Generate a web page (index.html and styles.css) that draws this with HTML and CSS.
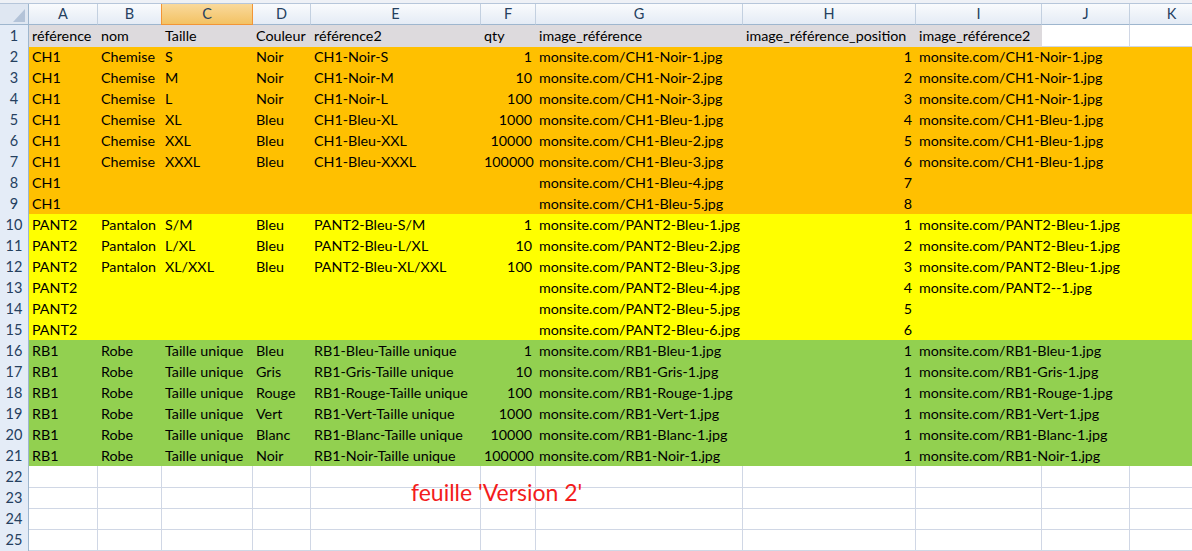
FILE: index.html
```html
<!DOCTYPE html>
<html lang="fr">
<head>
<meta charset="utf-8">
<title>Feuille Version 2</title>
<link rel="stylesheet" href="styles.css">
</head>
<body>
<div class="sheet">
  <div class="topstrip"></div>
  <div class="row colhead">
    <div class="corner"><svg width="12" height="13" viewBox="0 0 12 13"><polygon points="12,0 12,13 0,13" fill="#b3c3d8"/></svg></div>
    <div class="ch">A</div><div class="ch">B</div><div class="ch sel">C</div><div class="ch">D</div><div class="ch">E</div><div class="ch">F</div><div class="ch">G</div><div class="ch">H</div><div class="ch">I</div><div class="ch">J</div><div class="ch">K</div>
  </div>

  <div class="row">
    <div class="rh">1</div>
    <div class="c gray">référence</div><div class="c gray">nom</div><div class="c gray">Taille</div><div class="c gray">Couleur</div><div class="c gray">référence2</div><div class="c gray">qty</div><div class="c gray">image_référence</div><div class="c gray">image_référence_position</div><div class="c gray">image_référence2</div><div class="c"></div><div class="c"></div>
  </div>

  <div class="row fill orange"><div class="rh">2</div><div class="c">CH1</div><div class="c">Chemise</div><div class="c">S</div><div class="c">Noir</div><div class="c">CH1-Noir-S</div><div class="c n">1</div><div class="c">monsite.com/CH1-Noir-1.jpg</div><div class="c n">1</div><div class="c">monsite.com/CH1-Noir-1.jpg</div><div class="c"></div><div class="c"></div></div>
  <div class="row fill orange"><div class="rh">3</div><div class="c">CH1</div><div class="c">Chemise</div><div class="c">M</div><div class="c">Noir</div><div class="c">CH1-Noir-M</div><div class="c n">10</div><div class="c">monsite.com/CH1-Noir-2.jpg</div><div class="c n">2</div><div class="c">monsite.com/CH1-Noir-1.jpg</div><div class="c"></div><div class="c"></div></div>
  <div class="row fill orange"><div class="rh">4</div><div class="c">CH1</div><div class="c">Chemise</div><div class="c">L</div><div class="c">Noir</div><div class="c">CH1-Noir-L</div><div class="c n">100</div><div class="c">monsite.com/CH1-Noir-3.jpg</div><div class="c n">3</div><div class="c">monsite.com/CH1-Noir-1.jpg</div><div class="c"></div><div class="c"></div></div>
  <div class="row fill orange"><div class="rh">5</div><div class="c">CH1</div><div class="c">Chemise</div><div class="c">XL</div><div class="c">Bleu</div><div class="c">CH1-Bleu-XL</div><div class="c n">1000</div><div class="c">monsite.com/CH1-Bleu-1.jpg</div><div class="c n">4</div><div class="c">monsite.com/CH1-Bleu-1.jpg</div><div class="c"></div><div class="c"></div></div>
  <div class="row fill orange"><div class="rh">6</div><div class="c">CH1</div><div class="c">Chemise</div><div class="c">XXL</div><div class="c">Bleu</div><div class="c">CH1-Bleu-XXL</div><div class="c n">10000</div><div class="c">monsite.com/CH1-Bleu-2.jpg</div><div class="c n">5</div><div class="c">monsite.com/CH1-Bleu-1.jpg</div><div class="c"></div><div class="c"></div></div>
  <div class="row fill orange"><div class="rh">7</div><div class="c">CH1</div><div class="c">Chemise</div><div class="c">XXXL</div><div class="c">Bleu</div><div class="c">CH1-Bleu-XXXL</div><div class="c n">100000</div><div class="c">monsite.com/CH1-Bleu-3.jpg</div><div class="c n">6</div><div class="c">monsite.com/CH1-Bleu-1.jpg</div><div class="c"></div><div class="c"></div></div>
  <div class="row fill orange"><div class="rh">8</div><div class="c">CH1</div><div class="c"></div><div class="c"></div><div class="c"></div><div class="c"></div><div class="c n"></div><div class="c">monsite.com/CH1-Bleu-4.jpg</div><div class="c n">7</div><div class="c"></div><div class="c"></div><div class="c"></div></div>
  <div class="row fill orange"><div class="rh">9</div><div class="c">CH1</div><div class="c"></div><div class="c"></div><div class="c"></div><div class="c"></div><div class="c n"></div><div class="c">monsite.com/CH1-Bleu-5.jpg</div><div class="c n">8</div><div class="c"></div><div class="c"></div><div class="c"></div></div>

  <div class="row fill yellow"><div class="rh">10</div><div class="c">PANT2</div><div class="c">Pantalon</div><div class="c">S/M</div><div class="c">Bleu</div><div class="c">PANT2-Bleu-S/M</div><div class="c n">1</div><div class="c">monsite.com/PANT2-Bleu-1.jpg</div><div class="c n">1</div><div class="c">monsite.com/PANT2-Bleu-1.jpg</div><div class="c"></div><div class="c"></div></div>
  <div class="row fill yellow"><div class="rh">11</div><div class="c">PANT2</div><div class="c">Pantalon</div><div class="c">L/XL</div><div class="c">Bleu</div><div class="c">PANT2-Bleu-L/XL</div><div class="c n">10</div><div class="c">monsite.com/PANT2-Bleu-2.jpg</div><div class="c n">2</div><div class="c">monsite.com/PANT2-Bleu-1.jpg</div><div class="c"></div><div class="c"></div></div>
  <div class="row fill yellow"><div class="rh">12</div><div class="c">PANT2</div><div class="c">Pantalon</div><div class="c">XL/XXL</div><div class="c">Bleu</div><div class="c">PANT2-Bleu-XL/XXL</div><div class="c n">100</div><div class="c">monsite.com/PANT2-Bleu-3.jpg</div><div class="c n">3</div><div class="c">monsite.com/PANT2-Bleu-1.jpg</div><div class="c"></div><div class="c"></div></div>
  <div class="row fill yellow"><div class="rh">13</div><div class="c">PANT2</div><div class="c"></div><div class="c"></div><div class="c"></div><div class="c"></div><div class="c n"></div><div class="c">monsite.com/PANT2-Bleu-4.jpg</div><div class="c n">4</div><div class="c">monsite.com/PANT2--1.jpg</div><div class="c"></div><div class="c"></div></div>
  <div class="row fill yellow"><div class="rh">14</div><div class="c">PANT2</div><div class="c"></div><div class="c"></div><div class="c"></div><div class="c"></div><div class="c n"></div><div class="c">monsite.com/PANT2-Bleu-5.jpg</div><div class="c n">5</div><div class="c"></div><div class="c"></div><div class="c"></div></div>
  <div class="row fill yellow"><div class="rh">15</div><div class="c">PANT2</div><div class="c"></div><div class="c"></div><div class="c"></div><div class="c"></div><div class="c n"></div><div class="c">monsite.com/PANT2-Bleu-6.jpg</div><div class="c n">6</div><div class="c"></div><div class="c"></div><div class="c"></div></div>

  <div class="row fill green"><div class="rh">16</div><div class="c">RB1</div><div class="c">Robe</div><div class="c">Taille unique</div><div class="c">Bleu</div><div class="c">RB1-Bleu-Taille unique</div><div class="c n">1</div><div class="c">monsite.com/RB1-Bleu-1.jpg</div><div class="c n">1</div><div class="c">monsite.com/RB1-Bleu-1.jpg</div><div class="c"></div><div class="c"></div></div>
  <div class="row fill green"><div class="rh">17</div><div class="c">RB1</div><div class="c">Robe</div><div class="c">Taille unique</div><div class="c">Gris</div><div class="c">RB1-Gris-Taille unique</div><div class="c n">10</div><div class="c">monsite.com/RB1-Gris-1.jpg</div><div class="c n">1</div><div class="c">monsite.com/RB1-Gris-1.jpg</div><div class="c"></div><div class="c"></div></div>
  <div class="row fill green"><div class="rh">18</div><div class="c">RB1</div><div class="c">Robe</div><div class="c">Taille unique</div><div class="c">Rouge</div><div class="c">RB1-Rouge-Taille unique</div><div class="c n">100</div><div class="c">monsite.com/RB1-Rouge-1.jpg</div><div class="c n">1</div><div class="c">monsite.com/RB1-Rouge-1.jpg</div><div class="c"></div><div class="c"></div></div>
  <div class="row fill green"><div class="rh">19</div><div class="c">RB1</div><div class="c">Robe</div><div class="c">Taille unique</div><div class="c">Vert</div><div class="c">RB1-Vert-Taille unique</div><div class="c n">1000</div><div class="c">monsite.com/RB1-Vert-1.jpg</div><div class="c n">1</div><div class="c">monsite.com/RB1-Vert-1.jpg</div><div class="c"></div><div class="c"></div></div>
  <div class="row fill green"><div class="rh">20</div><div class="c">RB1</div><div class="c">Robe</div><div class="c">Taille unique</div><div class="c">Blanc</div><div class="c">RB1-Blanc-Taille unique</div><div class="c n">10000</div><div class="c">monsite.com/RB1-Blanc-1.jpg</div><div class="c n">1</div><div class="c">monsite.com/RB1-Blanc-1.jpg</div><div class="c"></div><div class="c"></div></div>
  <div class="row fill green"><div class="rh">21</div><div class="c">RB1</div><div class="c">Robe</div><div class="c">Taille unique</div><div class="c">Noir</div><div class="c">RB1-Noir-Taille unique</div><div class="c n">100000</div><div class="c">monsite.com/RB1-Noir-1.jpg</div><div class="c n">1</div><div class="c">monsite.com/RB1-Noir-1.jpg</div><div class="c"></div><div class="c"></div></div>

  <div class="row"><div class="rh">22</div><div class="c"></div><div class="c"></div><div class="c"></div><div class="c"></div><div class="c"></div><div class="c"></div><div class="c"></div><div class="c"></div><div class="c"></div><div class="c"></div><div class="c"></div></div>
  <div class="row"><div class="rh">23</div><div class="c"></div><div class="c"></div><div class="c"></div><div class="c"></div><div class="c"></div><div class="c"></div><div class="c"></div><div class="c"></div><div class="c"></div><div class="c"></div><div class="c"></div></div>
  <div class="row"><div class="rh">24</div><div class="c"></div><div class="c"></div><div class="c"></div><div class="c"></div><div class="c"></div><div class="c"></div><div class="c"></div><div class="c"></div><div class="c"></div><div class="c"></div><div class="c"></div></div>
  <div class="row"><div class="rh">25</div><div class="c"></div><div class="c"></div><div class="c"></div><div class="c"></div><div class="c"></div><div class="c"></div><div class="c"></div><div class="c"></div><div class="c"></div><div class="c"></div><div class="c"></div></div>
  <div class="row"><div class="rh"></div><div class="c"></div><div class="c"></div><div class="c"></div><div class="c"></div><div class="c"></div><div class="c"></div><div class="c"></div><div class="c"></div><div class="c"></div><div class="c"></div><div class="c"></div></div>

  <div class="note">feuille 'Version 2'</div>
</div>
</body>
</html>
```

FILE: styles.css
```css
html, body {
  margin: 0;
  padding: 0;
  background: #ffffff;
  overflow: hidden;
}

.sheet {
  position: relative;
  width: 1192px;
  height: 551px;
  overflow: hidden;
  font-family: Lato, "Liberation Sans", sans-serif;
  font-size: 14.3px;
  color: #000;
}

.topstrip {
  height: 3px;
  background: #eef1f6;
}

.row {
  display: grid;
  grid-template-columns: 29px 69px 64px 91px 58px 170px 55px 207px 173px 126px 88px 84px;
  height: 21px;
  width: 1214px;
}

.colhead {
  height: 22px;
  border-top: 1px solid #b6c6da;
  box-sizing: border-box;
}

.corner {
  background: #dfe7f2;
  border-right: 1px solid #9eb6ce;
  border-bottom: 1px solid #9eb6ce;
  display: flex;
  align-items: flex-end;
  justify-content: flex-end;
  padding: 0 3px 2px 0;
}

.ch {
  background: linear-gradient(#f9fbfd, #e4ebf5);
  border-right: 1px solid #c3d0e0;
  border-bottom: 1px solid #9eb6ce;
  text-align: center;
  line-height: 20px;
  color: #25405f;
  font-size: 14.5px;
}

.ch.sel {
  background: linear-gradient(#f9d99c, #f3c263);
  border-right: 1px solid #f29536;
  border-left: 1px solid #f29536;
  border-bottom: 1px solid #f29536;
  margin-left: -1px;
}

.rh {
  background: #e4ecf7;
  border-right: 1px solid #9eb6ce;
  border-bottom: 1px solid #c5d3e4;
  text-align: center;
  line-height: 21px;
  color: #25405f;
  font-size: 14.5px;
}

.c {
  border-right: 1px solid #d0d7e5;
  border-bottom: 1px solid #d0d7e5;
  padding: 0 3px;
  line-height: 21px;
  white-space: nowrap;
  overflow: visible;
  min-width: 0;
}

.c.n {
  text-align: right;
}

.c.gray {
  background: #dddadd;
  border-color: #dddadd;
}

.fill .c {
  border-color: transparent;
}

.orange { background: #ffc000; }
.yellow { background: #ffff00; }
.green { background: #92d050; }

.note {
  position: absolute;
  left: 411px;
  top: 478px;
  font-size: 23px;
  line-height: 28px;
  color: #f31c1c;
  white-space: nowrap;
}
```
